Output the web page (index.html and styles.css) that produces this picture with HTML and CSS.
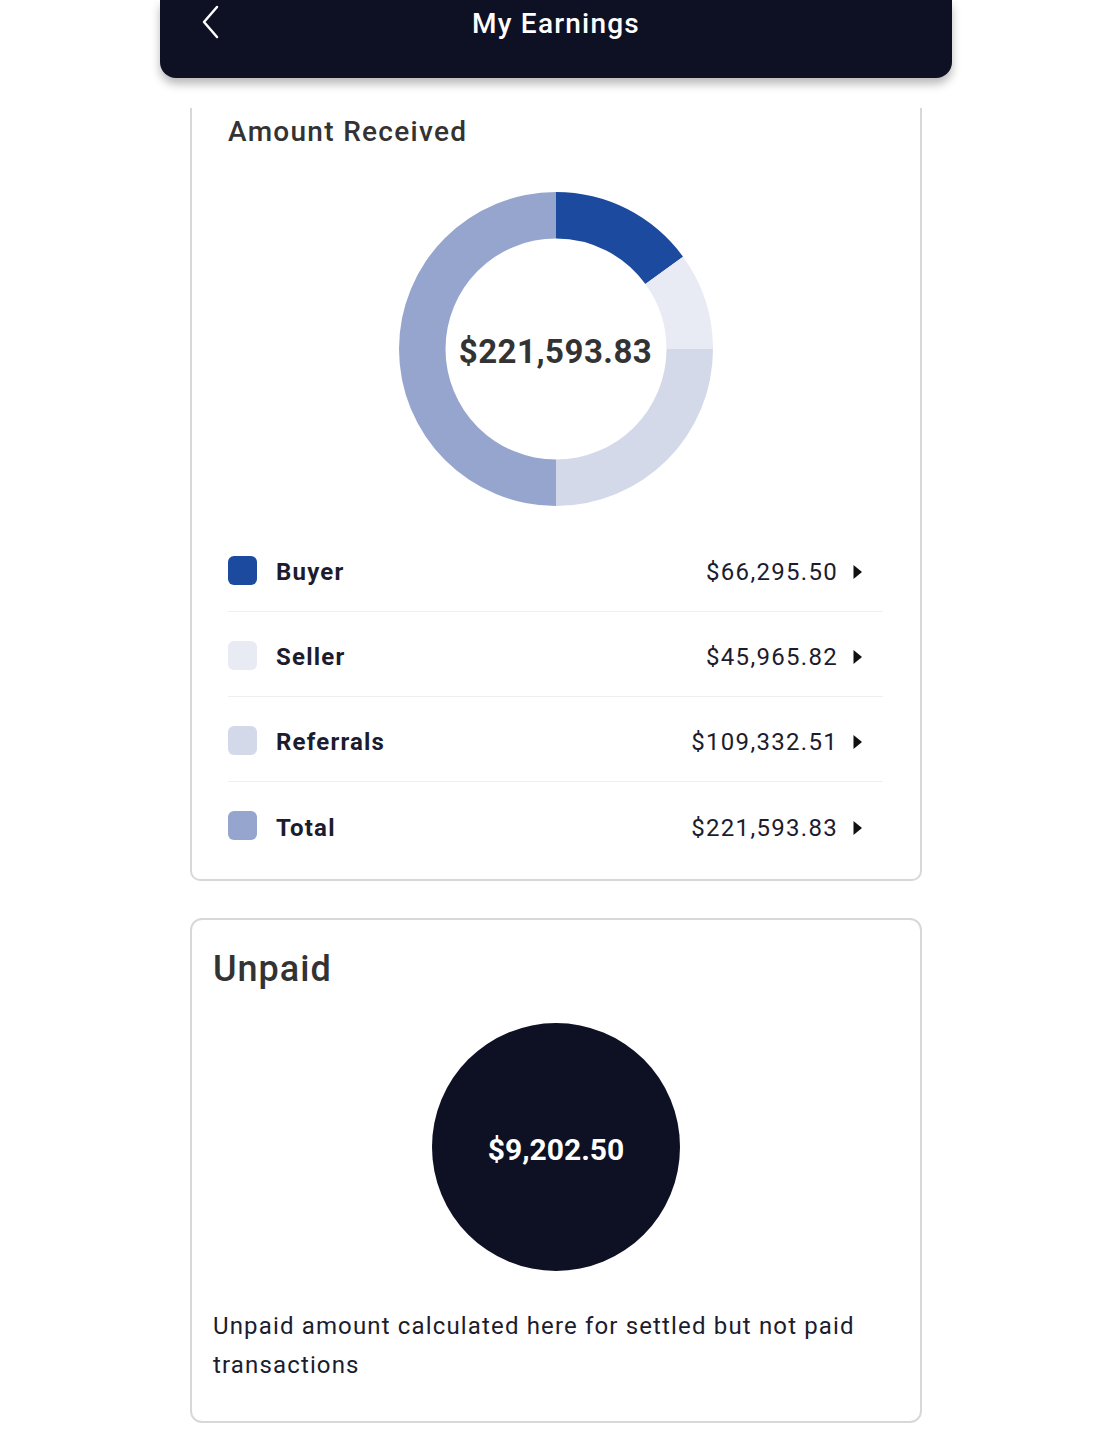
FILE: index.html
```html
<!DOCTYPE html>
<html lang="en">
<head>
<meta charset="utf-8">
<title>My Earnings</title>
<link rel="stylesheet" href="styles.css">
</head>
<body>
<div class="page">
  <header class="topbar">
    <svg class="back" width="20" height="34" viewBox="0 0 20 34" aria-hidden="true">
      <path d="M16 2 L3 17 L16 32" fill="none" stroke="#fff" stroke-width="2.5" stroke-linecap="round" stroke-linejoin="round"/>
    </svg>
    <h1 class="topbar-title">My Earnings</h1>
  </header>

  <section class="card card-received">
    <h2 class="received-title">Amount Received</h2>
    <div class="donut">
      <svg width="314" height="314" viewBox="0 0 314 314" aria-hidden="true">
        <path d="M157 0 A157 157 0 0 1 284.0 64.7 L246.4 92.0 A110.5 110.5 0 0 0 157 46.5 Z" fill="#1c4a9e"/>
        <path d="M284.0 64.7 A157 157 0 0 1 314 157 L267.5 157 A110.5 110.5 0 0 0 246.4 92.0 Z" fill="#e8eaf4"/>
        <path d="M314 157 A157 157 0 0 1 157 314 L157 267.5 A110.5 110.5 0 0 0 267.5 157 Z" fill="#d4d9ea"/>
        <path d="M157 314 A157 157 0 0 1 157 0 L157 46.5 A110.5 110.5 0 0 0 157 267.5 Z" fill="#95a5cd"/>
      </svg>
      <div class="donut-label">$221,593.83</div>
    </div>
    <ul class="legend">
      <li class="legend-row">
        <span class="swatch swatch-buyer"></span>
        <span class="legend-name">Buyer</span>
        <span class="legend-value">$66,295.50</span>
        <svg class="caret" width="24" height="24" viewBox="0 0 24 24" aria-hidden="true"><path d="M7.5 5 L16 12 L7.5 19 Z" fill="#111"/></svg>
      </li>
      <li class="legend-row">
        <span class="swatch swatch-seller"></span>
        <span class="legend-name">Seller</span>
        <span class="legend-value">$45,965.82</span>
        <svg class="caret" width="24" height="24" viewBox="0 0 24 24" aria-hidden="true"><path d="M7.5 5 L16 12 L7.5 19 Z" fill="#111"/></svg>
      </li>
      <li class="legend-row">
        <span class="swatch swatch-referrals"></span>
        <span class="legend-name">Referrals</span>
        <span class="legend-value">$109,332.51</span>
        <svg class="caret" width="24" height="24" viewBox="0 0 24 24" aria-hidden="true"><path d="M7.5 5 L16 12 L7.5 19 Z" fill="#111"/></svg>
      </li>
      <li class="legend-row">
        <span class="swatch swatch-total"></span>
        <span class="legend-name">Total</span>
        <span class="legend-value">$221,593.83</span>
        <svg class="caret" width="24" height="24" viewBox="0 0 24 24" aria-hidden="true"><path d="M7.5 5 L16 12 L7.5 19 Z" fill="#111"/></svg>
      </li>
    </ul>
  </section>

  <section class="card card-unpaid">
    <h2 class="unpaid-title">Unpaid</h2>
    <div class="unpaid-circle">$9,202.50</div>
    <p class="unpaid-note">Unpaid amount calculated here for settled but not paid transactions</p>
  </section>
</div>
</body>
</html>
```

FILE: styles.css
```css
* {
  box-sizing: border-box;
}

html, body {
  margin: 0;
  padding: 0;
  background: #ffffff;
}

body {
  font-family: Roboto, "Noto Sans", "Liberation Sans", sans-serif;
  color: #1c1c2e;
}

.page {
  width: 1112px;
  display: flex;
  flex-direction: column;
  align-items: center;
}

.topbar {
  position: relative;
  z-index: 2;
  width: 792px;
  height: 78px;
  background: #0e1024;
  border-radius: 0 0 16px 16px;
  box-shadow: 0 6px 10px rgba(0, 0, 0, 0.28);
  display: flex;
  justify-content: center;
  align-items: flex-start;
}

.back {
  position: absolute;
  left: 41px;
  top: 5px;
}

.topbar-title {
  margin: 5px 0 0;
  font-size: 28px;
  line-height: 38px;
  font-weight: 500;
  color: #ffffff;
  letter-spacing: 1.2px;
}

.card {
  width: 732px;
  border: 2px solid #d8d8d8;
  background: #fff;
}

.card-received {
  margin-top: 30px;
  border-top: none;
  border-radius: 0 0 10px 10px;
  padding: 6px 37px 12px 36px;
}

.received-title {
  margin: 0;
  font-size: 28px;
  line-height: 36px;
  font-weight: 500;
  color: #333333;
  letter-spacing: 1.3px;
}

.donut {
  position: relative;
  width: 314px;
  height: 314px;
  margin: 42px auto 21px;
}

.donut svg {
  display: block;
}

.donut-label {
  position: absolute;
  inset: 0;
  display: flex;
  align-items: center;
  justify-content: center;
  font-size: 33px;
  font-weight: 700;
  color: #333333;
  padding-top: 4px;
  letter-spacing: 0.5px;
}

.legend {
  list-style: none;
  margin: 0;
  padding: 0;
}

.legend-row {
  height: 85px;
  padding: 6px 13px 0 0;
  display: flex;
  align-items: center;
  border-bottom: 1px solid #efefef;
}

.legend-row:last-child {
  border-bottom: none;
}

.swatch {
  width: 29px;
  height: 29px;
  border-radius: 6px;
  flex: none;
  margin-top: -4px;
}

.swatch-buyer { background: #1c4a9e; }
.swatch-seller { background: #e8eaf4; }
.swatch-referrals { background: #d4d9ea; }
.swatch-total { background: #95a5cd; }

.legend-name {
  margin-left: 19px;
  font-size: 24px;
  font-weight: 700;
  color: #1c1c2e;
  letter-spacing: 1.2px;
}

.legend-value {
  margin-left: auto;
  font-size: 24px;
  font-weight: 400;
  color: #1c1c2e;
  letter-spacing: 1.3px;
}

.caret {
  margin-left: 8px;
  flex: none;
}

.card-unpaid {
  margin-top: 37px;
  margin-bottom: 18px;
  border-radius: 12px;
  padding: 27px 21px 36px 21px;
  display: flex;
  flex-direction: column;
}

.unpaid-title {
  margin: 0;
  font-size: 36px;
  line-height: 44px;
  font-weight: 500;
  color: #333333;
  letter-spacing: 1px;
}

.unpaid-circle {
  width: 248px;
  height: 248px;
  border-radius: 50%;
  background: #0e1024;
  color: #ffffff;
  margin: 32px auto 36px;
  display: flex;
  align-items: center;
  justify-content: center;
  font-size: 30px;
  font-weight: 700;
  padding-top: 4px;
}

.unpaid-note {
  margin: 0;
  font-size: 24px;
  line-height: 39px;
  color: #1c1c2e;
  letter-spacing: 1.15px;
}
```
